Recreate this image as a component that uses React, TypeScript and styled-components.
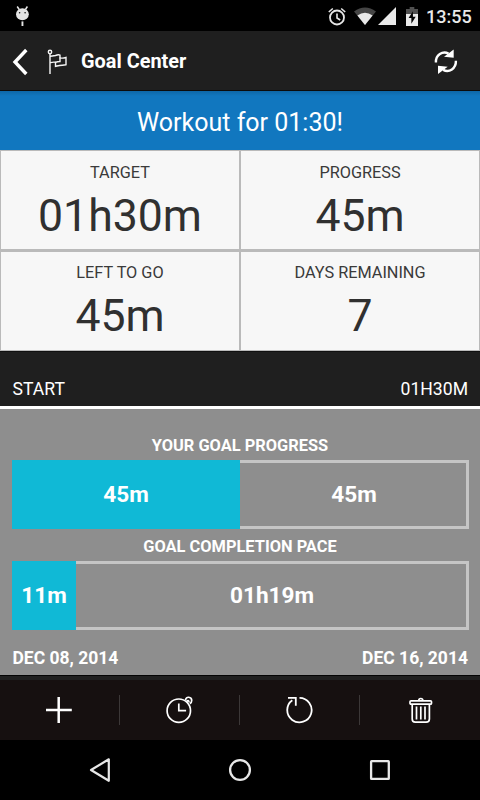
import React from "react";
import styled, { createGlobalStyle } from "styled-components";

const GlobalStyle = createGlobalStyle`
  * { box-sizing: border-box; }
  body { margin: 0; background: #000; font-family: Roboto, sans-serif; }
`;

const Screen = styled.div`
  width: 480px;
  height: 800px;
  display: flex;
  flex-direction: column;
  overflow: hidden;
  background: #1f1f1f;
  color: #fff;
  white-space: nowrap;
  svg { display: block; flex: none; }
`;

const StatusBar = styled.div`
  height: 31px;
  flex: none;
  display: flex;
  align-items: center;
  padding: 2px 9px 0 14px;
  background: #000;
  color: #e9e9e9;
`;

const StatusIcons = styled.div`
  display: flex;
  align-items: center;
  margin-left: auto;
`;

const Clock = styled.span`
  width: 45px;
  margin-left: 8px;
  font-size: 18px;
  line-height: 24px;
  font-weight: 500;
`;

const SignalIcon = styled.svg`
  margin: 0 9px 0 1px;
`;

const AppBar = styled.header`
  height: 60px;
  flex: none;
  display: flex;
  align-items: center;
  padding: 2px 22px 0 12px;
  background: #1f1f1f;
  border-bottom: 1px solid #0c0c0c;
`;

const Title = styled.h1`
  margin: 0 auto 0 12px;
  font-size: 19.9px;
  line-height: 30px;
  font-weight: 700;
`;

const Banner = styled.div`
  height: 59px;
  flex: none;
  padding-top: 1px;
  background: linear-gradient(#0e67a7, #1177bf 5px);
  font-size: 25px;
  line-height: 62px;
  text-align: center;
`;

const StatGrid = styled.section`
  height: 201px;
  flex: none;
  display: grid;
  grid-template-columns: 1fr 1fr;
  grid-template-rows: 98px 98px;
  gap: 3px 2px;
  padding: 1px;
  background: #bababa;
`;

const StatCell = styled.div`
  display: flex;
  flex-direction: column;
  align-items: center;
  padding-top: 10px;
  background: #f7f7f7;
  color: #303030;
  &:nth-child(-n + 2) { padding-top: 11px; }
`;

const StatLabel = styled.div`
  font-size: 16.3px;
  line-height: 22px;
  color: #3a3a3a;
`;

const StatValue = styled.div`
  font-size: 44.6px;
  line-height: 54px;
  margin-top: 5px;
`;

const RangeHeader = styled.div`
  height: 58px;
  flex: none;
  display: flex;
  justify-content: space-between;
  padding: 25px 12px 0 12.5px;
  border-top: 1px solid #101010;
  border-bottom: 3px solid #fff;
  font-size: 17.6px;
  line-height: 24px;
`;

const ProgressPanel = styled.section`
  height: 266px;
  flex: none;
  padding: 26px 12px 0 12px;
  background: #8e8e8e;
`;

const BarTitle = styled.div`
  font-size: 16.4px;
  line-height: 22px;
  height: 25px;
  font-weight: 700;
  text-align: center;
`;

const Bar = styled.div`
  display: flex;
  width: 457px;
  height: 69px;
  margin-bottom: 7px;
  font-size: 22.6px;
  line-height: 69px;
  font-weight: 700;
  text-align: center;
`;

const Done = styled.div<{ $width: number }>`
  width: ${(p) => p.$width}px;
  background: #10b9d6;
`;

const Remaining = styled.div`
  flex: 1;
  border: solid #c5c5c5;
  border-width: 3px 3px 3px 0;
  padding-left: 2px;
  line-height: 63px;
`;

const DateRow = styled.div`
  display: flex;
  justify-content: space-between;
  padding: 11px 0 0 0.5px;
  font-size: 17.5px;
  line-height: 20px;
  font-weight: 700;
`;

const Toolbar = styled.div`
  height: 65px;
  flex: none;
  display: grid;
  grid-template-columns: repeat(4, 1fr);
  align-items: center;
  border-top: 1px solid #030303;
  box-shadow: inset 0 4px #1f1f1f;
  padding-top: 4px;
  background: #161010;
`;

const ToolButton = styled.button<{ $shift?: number }>`
  height: 30px;
  display: flex;
  align-items: center;
  justify-content: center;
  padding: 0 0 0 ${(p) => p.$shift ?? 0}px;
  border: 0;
  border-right: 1px solid #3c3838;
  background: none;
  color: #fff;
  &:last-child { border-right-color: transparent; }
`;

const NavBar = styled.nav`
  height: 60px;
  flex: none;
  display: flex;
  align-items: center;
  justify-content: space-between;
  padding: 0 85px;
  background: #000;
  color: #e7e7e7;
`;

const stats = [
  ["TARGET", "01h30m"],
  ["PROGRESS", "45m"],
  ["LEFT TO GO", "45m"],
  ["DAYS REMAINING", "7"],
];

const bars = [
  { title: "YOUR GOAL PROGRESS", done: "45m", left: "45m", width: 228 },
  { title: "GOAL COMPLETION PACE", done: "11m", left: "01h19m", width: 64 },
];

const BugdroidIcon = () => (
  <svg width="16" height="22" viewBox="0 0 16 22" fill="#e4e4e4">
    <path d="M3.200 .5l2 3M13.400 .5l-2 3" stroke="#e4e4e4" strokeWidth="1.500" />
    <ellipse cx="8.400" cy="8.200" rx="6.400" ry="6" />
    <path d="M7.500 15.400h1.900v4.600h-1.900z" />
    <circle cx="5.600" cy="6.700" r=".8" fill="#111" />
    <circle cx="11.100" cy="6.700" r=".8" fill="#111" />
  </svg>
);

const AlarmIcon = () => (
  <svg width="20" height="20" viewBox="0 0 20 20" fill="none" stroke="#e6e6e6">
    <circle cx="10" cy="10.500" r="7" strokeWidth="1.800" />
    <path d="M10 6.500v4.500l3.200 2M1.800 5l4-3.500M18.200 5l-4-3.500" strokeWidth="1.600" />
  </svg>
);

const WifiIcon = () => (
  <svg width="22" height="19" viewBox="0 0 22 19">
    <path d="M0 4.500Q11-3.500 22 4.500L11 18z" fill="#454545" />
    <path d="M3.400 8.500Q11 3 18.600 8.500L11 18z" fill="#e9e9e9" />
  </svg>
);

const BatteryIcon = () => (
  <svg width="12" height="19" viewBox="0 0 13 19" preserveAspectRatio="none">
    <path d="M4 0h5v2h4v5H0V2h4z" fill="#505050" />
    <path d="M0 7h13v12H0z" fill="#e9e9e9" />
    <path d="M7.500 4.200L2.800 11h3v5.800l4.700-7h-3z" fill="#050505" />
  </svg>
);

const Sync = () => (
  <svg width="24" height="26" viewBox="0 0 24 26" fill="none" stroke="#fff" strokeWidth="2.400">
    <path d="M1.900 13.500C1.600 6 8.500 1.600 14.500 4.600" />
    <path d="M19.700 .6v8.200l-9.700-1z" fill="#fff" stroke="none" />
    <path d="M21.900 11.800c.3 7.800-6.700 12.100-12.700 9.100" />
    <path d="M4 25v-8.200l9.700 1z" fill="#fff" stroke="none" />
  </svg>
);

export default function App() {
  return (
    <Screen>
      <GlobalStyle />
      <StatusBar>
        <BugdroidIcon />
        <StatusIcons>
          <AlarmIcon />
          <svg width="7" height="1" />
          <WifiIcon />
          <SignalIcon width="20" height="19" viewBox="0 0 20 19">
            <path d="M1 18L19 0v18z" fill="#e9e9e9" />
          </SignalIcon>
          <BatteryIcon />
          <Clock>13:55</Clock>
        </StatusIcons>
      </StatusBar>
      <AppBar>
        <svg width="16" height="28" viewBox="0 0 16 28" fill="none" stroke="#fff" strokeWidth="3.400">
          <path d="M14.300 2L3 14l11.300 12" />
        </svg>
        <svg width="41" height="28" viewBox="0 0 41 28" fill="none" stroke="#f5f5f5" strokeWidth="1.400">
          <circle cx="22" cy="4" r="1.700" />
          <path d="M22 6V26M22.500 8.300l5-.8q3-1.200 4.500-.3v2.600q2.500.8 6-.3v7.200q-4 .8-6.500.8l-4 .8v-4q-2.500-.4-5 .4" />
          <path d="M27.500 14.300q2.500-1 4.500-.8V9.500" />
        </svg>
        <Title>Goal Center</Title>
        <Sync />
      </AppBar>
      <Banner>Workout for 01:30!</Banner>
      <StatGrid>
        {stats.map(([label, value]) => (
          <StatCell key={label}>
            <StatLabel>{label}</StatLabel>
            <StatValue>{value}</StatValue>
          </StatCell>
        ))}
      </StatGrid>
      <RangeHeader>
        <span>START</span>
        <span>01H30M</span>
      </RangeHeader>
      <ProgressPanel>
        {bars.map((bar) => (
          <React.Fragment key={bar.title}>
            <BarTitle>{bar.title}</BarTitle>
            <Bar>
              <Done $width={bar.width}>{bar.done}</Done>
              <Remaining>{bar.left}</Remaining>
            </Bar>
          </React.Fragment>
        ))}
        <DateRow>
          <span>DEC 08, 2014</span>
          <span>DEC 16, 2014</span>
        </DateRow>
      </ProgressPanel>
      <Toolbar>
        <ToolButton aria-label="Add">
          <svg width="28" height="28" viewBox="0 0 28 28" stroke="#fff" strokeWidth="2.500">
            <path d="M12.700 1v26M0 14h25.800" />
          </svg>
        </ToolButton>
        <ToolButton aria-label="Set reminder">
          <svg width="28" height="28" viewBox="0 0 28 28" fill="none" stroke="#fff" strokeWidth="1.700">
            <circle cx="12.800" cy="14.700" r="11.700" />
            <path d="M12.800 7.500v7.200h7.300" />
            <path d="M19.600 4c0-4 6.300-3.500 6.100.5 0 1.500-.7 2.500-1.800 3.300M20.500 5.500q2.500-2 2.500 1" />
          </svg>
        </ToolButton>
        <ToolButton aria-label="Restart">
          <svg width="28" height="28" viewBox="0 0 28 28" fill="none" stroke="#fff" strokeWidth="1.800">
            <path d="M13.500 1.900A12.200 12.200 0 1 1 6.300 4.200M2 1.800h7.800v8" />
          </svg>
        </ToolButton>
        <ToolButton aria-label="Delete" $shift={2}>
          <svg width="24" height="28" viewBox="0 0 24 28" fill="none" stroke="#fff" strokeWidth="1.700">
            <rect x="1" y="4.800" width="21.500" height="3.400" rx="1" />
            <path d="M9.800 4.500a2 2 0 0 1 4 0M3.200 8.500V23q0 3.200 3 3.200h11q3.200 0 3.200-3.200V8.500M7.500 10.500v13M11.800 10.500v13M16 10.500v13" />
          </svg>
        </ToolButton>
      </Toolbar>
      <NavBar>
        <svg width="30" height="26" viewBox="0 0 30 26" fill="none" stroke="#e7e7e7" strokeWidth="2.200" strokeLinejoin="round">
          <path d="M23.800 2.300v21.500L6 13z" />
        </svg>
        <svg width="30" height="26" viewBox="0 0 30 26" fill="none" stroke="#e7e7e7" strokeWidth="2.300">
          <circle cx="15" cy="13" r="9.900" />
        </svg>
        <svg width="30" height="26" viewBox="0 0 30 26" fill="none" stroke="#e7e7e7" strokeWidth="2.300">
          <rect x="6.100" y="4.200" width="17.700" height="17.700" rx=".5" />
        </svg>
      </NavBar>
    </Screen>
  );
}
